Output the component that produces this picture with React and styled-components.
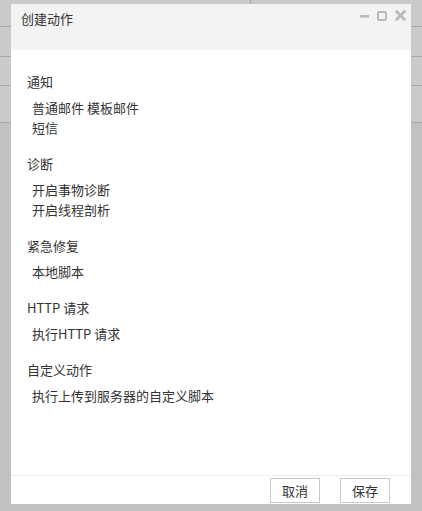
import React from 'react'
import styled, { createGlobalStyle } from 'styled-components'

const GlobalStyle = createGlobalStyle`
  html, body {
    margin: 0;
    padding: 0;
  }
  body {
    width: 422px;
    height: 511px;
    overflow: hidden;
    background: #c0c2c0;
    font-family: "Noto Sans CJK SC", "Noto Sans", sans-serif;
  }
`

const Screen = styled.div`
  position: relative;
  width: 422px;
  height: 511px;
`

const Backdrop = styled.div`
  display: flex;
  flex-direction: column;
`

const BackRow = styled.div`
  height: ${p => p.h}px;
  box-sizing: border-box;
  background: #cacaca;
  border-bottom: 1px solid #a4aaab;
  display: flex;
`

const BackCell = styled.div`
  width: ${p => p.w}px;
  border-right: ${p => (p.line ? '1px solid #a4aaab' : 'none')};
`

const Dialog = styled.div`
  position: absolute;
  left: 11px;
  top: 4px;
  width: 400px;
  height: 500px;
  background: #fff;
  display: flex;
  flex-direction: column;
`

const Header = styled.div`
  height: 46px;
  flex: none;
  background: #f3f3f3;
  position: relative;
  box-sizing: border-box;
  padding: 5px 10px 0;
`

const Title = styled.div`
  font-size: 13px;
  line-height: 20px;
  color: #333;
`

const Tools = styled.div`
  position: absolute;
  top: 6px;
  right: 5px;
  display: flex;
  align-items: center;
  gap: 8px;
`

const Body = styled.div`
  flex: 1;
  padding: 22px 16px 0;
`

const Section = styled.div`
  margin-bottom: 16px;
`

const Heading = styled.div`
  font-size: 13px;
  line-height: 20px;
  color: #333;
  margin-bottom: 6px;
`

const Item = styled.div`
  font-size: 13px;
  line-height: 20px;
  color: #333;
  padding-left: 5px;
`

const Footer = styled.div`
  flex: none;
  height: 29px;
  box-sizing: border-box;
  border-top: 1px solid #eeeeee;
  display: flex;
  justify-content: flex-end;
  align-items: flex-start;
  gap: 20px;
  padding: 2px 21px 0 0;
`

const Button = styled.button`
  width: 50px;
  height: 25px;
  box-sizing: border-box;
  border: 1px solid #c8c8c8;
  background: #fff;
  color: #333;
  font-family: inherit;
  font-size: 13px;
  line-height: 20px;
  padding: 0;
`

const MinIcon = () => (
  <svg width="9" height="10" viewBox="0 0 9 10">
    <rect x="0" y="4" width="9" height="2.6" fill="#bababa" />
  </svg>
)

const MaxIcon = () => (
  <svg width="10" height="10" viewBox="0 0 10 10">
    <rect x="1" y="1" width="8" height="8" rx="1.2" fill="none" stroke="#bababa" strokeWidth="2" />
  </svg>
)

const CloseIcon = () => (
  <svg width="11" height="11" viewBox="0 0 11 11">
    <path d="M1.6 1.6 L9.4 9.4 M9.4 1.6 L1.6 9.4" stroke="#bababa" strokeWidth="2.8" strokeLinecap="round" />
  </svg>
)

const sections = [
  { title: '通知', items: ['普通邮件 模板邮件', '短信'] },
  { title: '诊断', items: ['开启事物诊断', '开启线程剖析'] },
  { title: '紧急修复', items: ['本地脚本'] },
  { title: 'HTTP 请求', items: ['执行HTTP 请求'] },
  { title: '自定义动作', items: ['执行上传到服务器的自定义脚本'] },
]

export default function App() {
  return (
    <Screen>
      <GlobalStyle />
      <Backdrop>
        <BackRow h={27}>
          <BackCell w={250} line />
        </BackRow>
        <BackRow h={30} />
        <BackRow h={29} />
        <BackRow h={37} />
      </Backdrop>
      <Dialog>
        <Header>
          <Title>创建动作</Title>
          <Tools>
            <MinIcon />
            <MaxIcon />
            <CloseIcon />
          </Tools>
        </Header>
        <Body>
          {sections.map(s => (
            <Section key={s.title}>
              <Heading>{s.title}</Heading>
              {s.items.map(it => (
                <Item key={it}>{it}</Item>
              ))}
            </Section>
          ))}
        </Body>
        <Footer>
          <Button>取消</Button>
          <Button>保存</Button>
        </Footer>
      </Dialog>
    </Screen>
  )
}
